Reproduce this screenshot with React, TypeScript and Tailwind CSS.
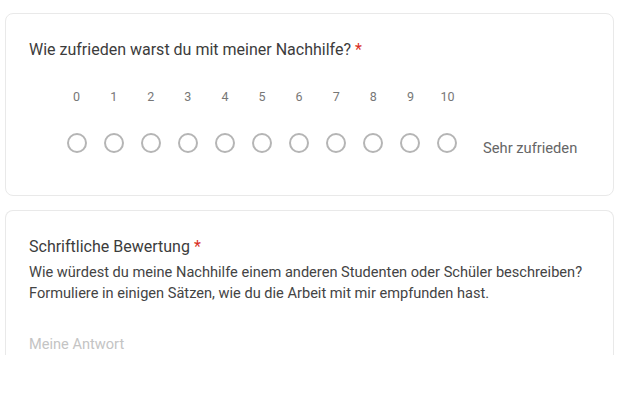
const scale = [0, 1, 2, 3, 4, 5, 6, 7, 8, 9, 10]

function Required() {
  return <span className="ml-1 text-[#d93025]">*</span>
}

export default function App() {
  return (
    <div className="h-[402px] overflow-hidden bg-white pl-[5px] pr-[4px] pt-[13px] font-['Roboto',sans-serif]">
      {/* Frage 1: Skala */}
      <div className="h-[183px] rounded-lg border border-[#e9e9e9] bg-white px-[23px] pt-[24px]">
        <div className="text-[16px] leading-6 text-[#3c3c3c]">
          Wie zufrieden warst du mit meiner Nachhilfe?
          <Required />
        </div>
        <div className="mt-[27px] flex items-start pl-[29px]">
          {scale.map((n) => (
            <div key={n} className="flex w-[37.1px] flex-col items-center">
              <span className="text-[12.5px] leading-4 text-[#777]">{n}</span>
              <span className="mt-[28px] h-5 w-5 rounded-full border-2 border-[#b5b5b5]" />
            </div>
          ))}
          <span className="ml-[17px] mt-[49px] text-[14.7px] leading-5 text-[#666]">Sehr zufrieden</span>
        </div>
      </div>

      {/* Frage 2: Freitext */}
      <div className="mt-[14px] h-[145px] overflow-hidden rounded-t-lg border border-b-0 border-[#e9e9e9] bg-white px-[23px] pt-[24px]">
        <div className="text-[16px] leading-6 text-[#3c3c3c]">
          Schriftliche Bewertung
          <Required />
        </div>
        <p className="mt-[3px] text-[14.6px] leading-[21px] text-[#444]">
          Wie würdest du meine Nachhilfe einem anderen Studenten oder Schüler beschreiben?
          <br />
          Formuliere in einigen Sätzen, wie du die Arbeit mit mir empfunden hast.
        </p>
        <div className="mt-[30px] text-[14.6px] leading-5 text-[#c4c4c4]">Meine Antwort</div>
      </div>
    </div>
  )
}
